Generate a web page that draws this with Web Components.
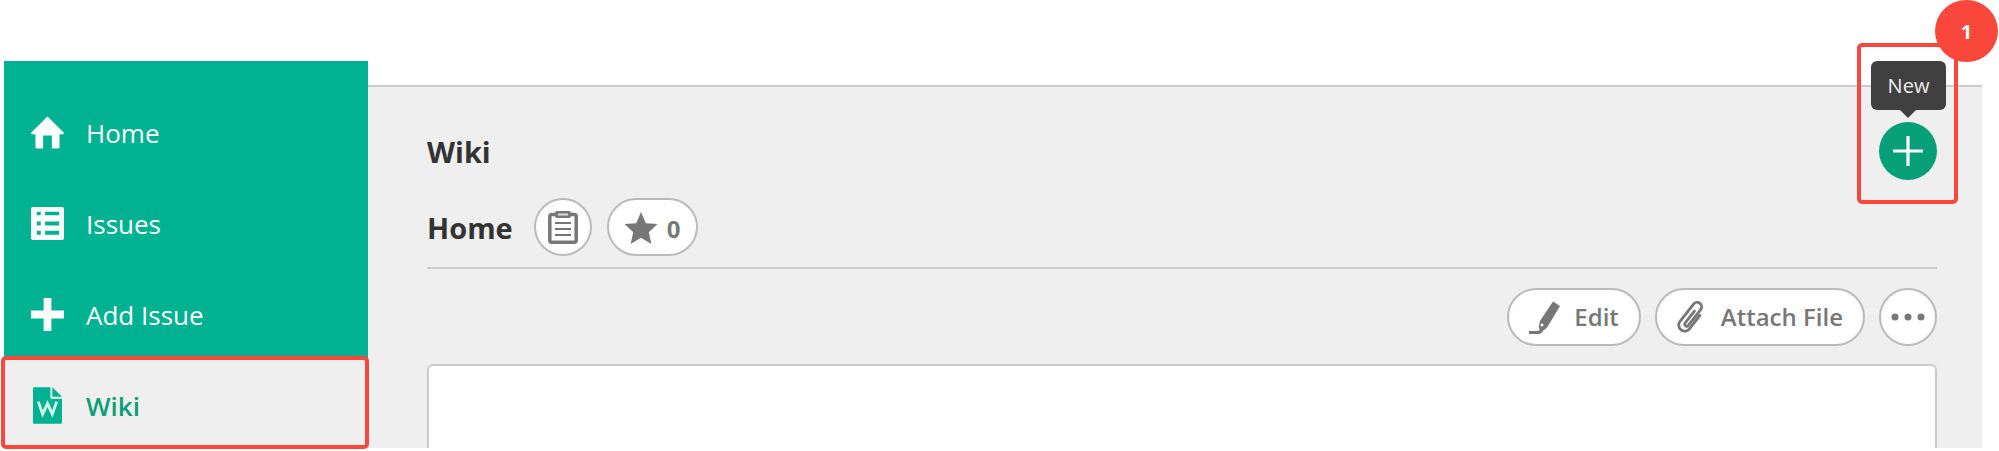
<!DOCTYPE html>
<html>
<head>
<meta charset="utf-8">
<style>
  html, body { margin: 0; background: #fff; }
  body { width: 1999px; height: 451px; overflow: hidden; font-family: "Open Sans", "Noto Sans", sans-serif; }
</style>
</head>
<body>
<app-shell>
  <side-nav slot="nav">
    <nav-item label="Home" icon="home"></nav-item>
    <nav-item label="Issues" icon="list"></nav-item>
    <nav-item label="Add Issue" icon="plus"></nav-item>
    <nav-item label="Wiki" icon="wiki" active></nav-item>
  </side-nav>
  <wiki-page slot="main"></wiki-page>
</app-shell>
<script>
const ICONS = {
  home: `<svg viewBox="0 0 34 34" width="33" height="33"><path fill="#fff" d="M17 0.500 33.600 17c.6.8 0 1.800-1 1.800H29.400V32c0 1-.7 1.500-1.500 1.500H21.500V20h-9V33.500H6.100c-.8 0-1.500-.5-1.500-1.500V18.800H1.400c-1 0-1.600-1-1-1.800Z"/></svg>`,
  list: `<svg viewBox="0 0 34 34" width="33" height="33"><path fill="#fff" fill-rule="evenodd" d="M2 0H32a2 2 0 0 1 2 2V32a2 2 0 0 1-2 2H2a2 2 0 0 1-2-2V2A2 2 0 0 1 2 0ZM6 5V8.500H10V5ZM14.500 5V8.500H29V5ZM6 15V19H10V15ZM14.500 15V19H29V15ZM6 24.500V28.500H10V24.500ZM14.500 24.500V28.500H29V24.500Z"/></svg>`,
  plus: `<svg viewBox="0 0 34 34" width="33" height="33"><path fill="#fff" d="M13 0H21V13H34V21H21V34H13V21H0V13H13Z"/></svg>`,
  wiki: `<svg viewBox="0 0 30 38" width="29" height="37"><path fill="#00b291" d="M1.500 0H18V11a1 1 0 0 0 1 1H30V36.500A1.500 1.500 0 0 1 28.500 38H1.500A1.500 1.500 0 0 1 0 36.500V1.500A1.500 1.500 0 0 1 1.500 0ZM20 0 30 10H20Z"/><path fill="none" stroke="#d3efe8" stroke-width="3" d="M5.500 15 10 28 15 17 20 28 24.500 15"/></svg>`
};

class AppShell extends HTMLElement {
  constructor() {
    super();
    this.attachShadow({mode: "open"});
    this.shadowRoot.innerHTML = `
      <style>
        :host { display: flex; position: relative; width: 1999px; height: 451px; padding: 61px 17px 3px 4px; box-sizing: border-box; }
        ::slotted([slot=nav]) { width: 364px; flex: none; }
        ::slotted([slot=main]) { flex: 1; min-width: 0; margin-top: 24px; }
        .mark { position: absolute; box-sizing: border-box; border: 4px solid #f9473b; border-radius: 5px; }
        .wiki { left: 1px; top: 356px; width: 368px; height: 93px; }
        .new { left: 1857px; top: 43px; width: 101px; height: 161px; }
        .badge { position: absolute; left: 1935px; top: 0; width: 63px; height: 62px; border-radius: 50%; background: #f9473b; color: #fff; font-size: 20px; font-weight: 700; display: flex; align-items: center; justify-content: center; }
      </style>
      <slot name="nav"></slot>
      <slot name="main"></slot>
      <div class="mark wiki"></div>
      <div class="mark new"></div>
      <div class="badge">1</div>`;
  }
}

class SideNav extends HTMLElement {
  constructor() {
    super();
    this.attachShadow({mode: "open"});
    this.shadowRoot.innerHTML = `
      <style>
        :host { display: flex; flex-direction: column; background: linear-gradient(#00b291 0 299px, #efefef 299px); padding-top: 26px; box-sizing: border-box; }
      </style>
      <slot></slot>`;
  }
}

class NavItem extends HTMLElement {
  constructor() {
    super();
    this.attachShadow({mode: "open"});
  }
  connectedCallback() {
    this.shadowRoot.innerHTML = `
      <style>
        :host { display: flex; align-items: center; height: 91px; padding-left: 27px; gap: 22px; color: #fff; font-size: 26px; font-weight: 500; flex: none; }
        :host([active]) { color: #0b9f78; font-weight: 600; }
        .ic { width: 33px; height: 38px; display: flex; align-items: center; justify-content: center; flex: none; }
      </style>
      <span class="ic">${ICONS[this.getAttribute("icon")]}</span>
      <span>${this.getAttribute("label")}</span>`;
  }
}

class PillButton extends HTMLElement {
  constructor() {
    super();
    this.attachShadow({mode: "open"});
    this.shadowRoot.innerHTML = `
      <style>
        :host { display: inline-flex; align-items: center; justify-content: center; box-sizing: border-box; height: 58px; min-width: 58px; border: 2px solid #bbb; border-radius: 29px; background: #fff; color: #777; font-size: 24px; font-weight: 600; gap: 14px; flex: none; }
        :host([wide]) { padding: 0 20px 2px; }
        :host([wide]) ::slotted(svg) { margin-top: 2px; }
        :host([compact]) { padding: 2px 15px 0; gap: 9px; font-weight: 700; }
        :host([compact]) ::slotted(svg) { margin-top: 0; }
      </style>
      <slot></slot>`;
  }
}

class WikiPage extends HTMLElement {
  constructor() {
    super();
    this.attachShadow({mode: "open"});
    this.shadowRoot.innerHTML = `
      <style>
        :host { display: flex; flex-direction: column; position: relative; background: #efefef; border-top: 2px solid #ccc; padding: 47px 45px 0 59px; box-sizing: border-box; color: #333; }
        .title { font-size: 29px; font-weight: 700; line-height: 36px; margin-bottom: 28px; }
        .head { display: flex; align-items: center; gap: 15px; height: 58px; }
        .head b { font-size: 29px; font-weight: 700; margin-right: 6px; }
        hr { border: 0; border-top: 2px solid #ccc; margin: 11px 0 0; width: 100%; }
        .tools { display: flex; justify-content: flex-end; gap: 14px; margin-top: 19px; }
        .body { margin-top: 18px; flex: 1; background: #fff; border: 2px solid #ccc; border-bottom: 0; border-radius: 6px 6px 0 0; box-sizing: border-box; }
        .fab { position: absolute; left: 1511px; top: 35px; width: 58px; height: 58px; border-radius: 50%; background: #079f77; display: flex; align-items: center; justify-content: center; }
        .tip { position: absolute; left: 1503px; top: -26px; width: 75px; height: 49px; background: #404040; border-radius: 6px; color: #eee; font-size: 20px; display: flex; align-items: center; justify-content: center; }
        .tip::after { content: ""; position: absolute; left: 29px; top: 49px; border: 8px solid transparent; border-top-color: #404040; border-bottom: 0; }
      </style>
      <div class="title">Wiki</div>
      <div class="head">
        <b>Home</b>
        <pill-button><svg viewBox="0 0 30 33" width="30" height="33"><rect x="1.800" y="3.500" width="26.400" height="27.700" rx="2" fill="none" stroke="#777" stroke-width="3.500"/><rect x="7" y="0" width="16" height="7" rx="2" fill="#777"/><rect x="10" y="2.500" width="10" height="2" fill="#ddd"/><path stroke="#777" stroke-width="2" d="M7 12H23M7 18H23M7 24H23"/></svg></pill-button>
        <pill-button wide compact><svg viewBox="0 0 34 33" width="34" height="32"><path fill="#777" d="M17 0 22 11.500 34 12.500 25 21 27.700 33 17 26.500 6.300 33 9 21 0 12.500 12 11.500Z"/></svg>0</pill-button>
      </div>
      <hr>
      <div class="tools">
        <pill-button wide><svg viewBox="0 0 31 33" width="31" height="33"><path fill="#777" fill-rule="evenodd" d="M24 .5 31 5 19 25Q16 30 11 30 9 26 11 20ZM13 22.500a1.500 1.500 0 1 0 .01 0Z"/><path fill="none" stroke="#777" stroke-width="3" d="M0 31.500H9Q12 31.500 13 28"/></svg>Edit</pill-button>
        <pill-button wide><svg viewBox="0 0 30 33" width="30" height="33"><path fill="none" stroke="#777" stroke-width="2.800" stroke-linecap="round" transform="rotate(38 15 16.500)" d="M20 10V27a6 6 0 0 1-12 0V5a4.500 4.500 0 0 1 9 0V25a2 2 0 0 1-4 0V10"/></svg>Attach File</pill-button>
        <pill-button><svg viewBox="0 0 34 8" width="34" height="8"><circle cx="4" cy="4" r="3.500" fill="#777"/><circle cx="17" cy="4" r="3.500" fill="#777"/><circle cx="30" cy="4" r="3.500" fill="#777"/></svg></pill-button>
      </div>
      <div class="body"></div>
      <div class="tip">New</div>
      <div class="fab"><svg viewBox="0 0 30 30" width="30" height="30"><path stroke="#fff" stroke-width="3.200" d="M15 0V30M0 15H30"/></svg></div>`;
  }
}

customElements.define("app-shell", AppShell);
customElements.define("side-nav", SideNav);
customElements.define("nav-item", NavItem);
customElements.define("pill-button", PillButton);
customElements.define("wiki-page", WikiPage);
</script>
</body>
</html>
